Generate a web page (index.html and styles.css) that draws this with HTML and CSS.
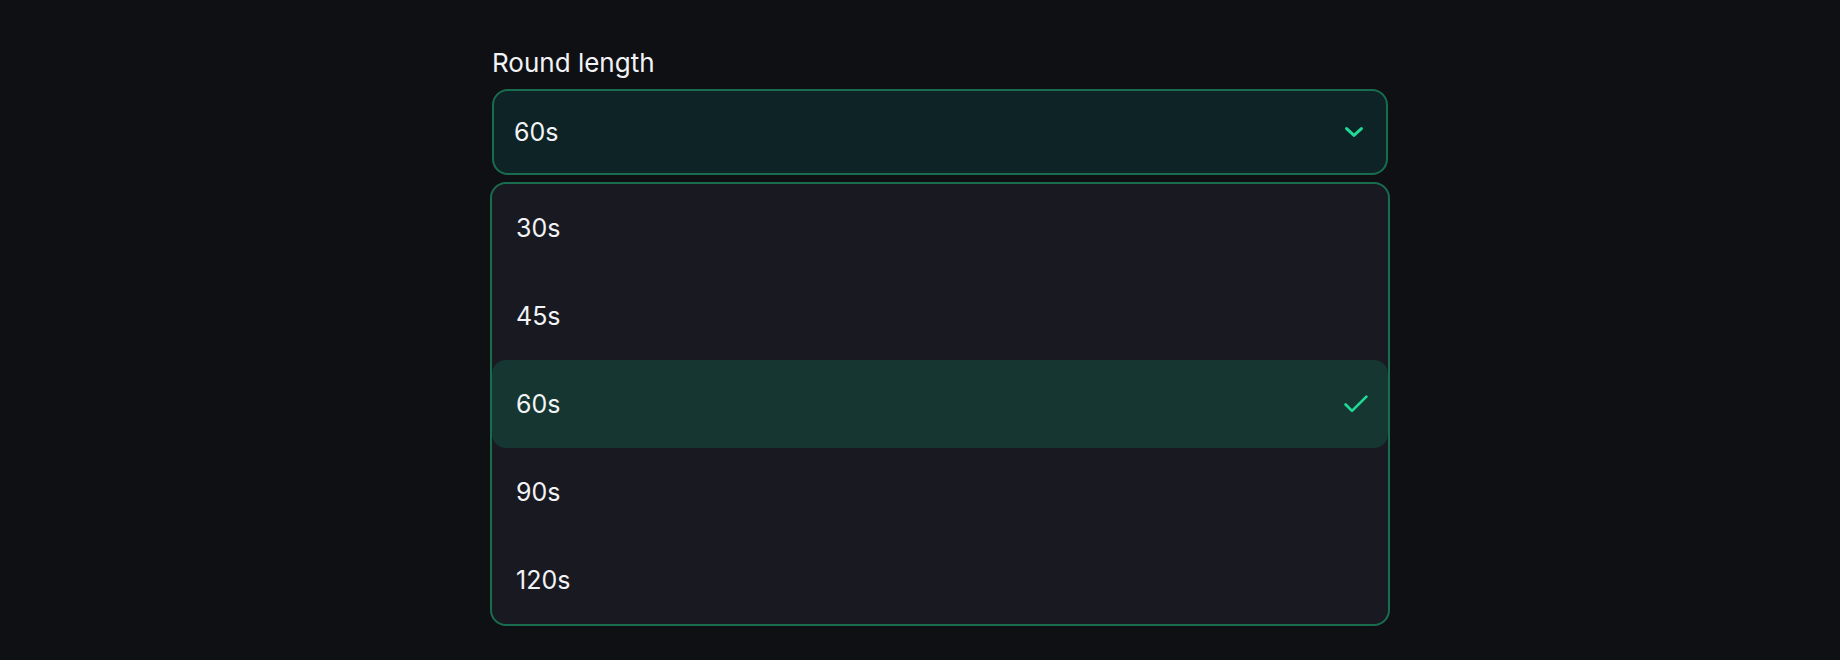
FILE: index.html
```html
<!DOCTYPE html>
<html lang="en">
<head>
<meta charset="utf-8">
<title>Round length</title>
<link rel="stylesheet" href="styles.css">
</head>
<body>
<main class="page">
  <div class="field">
    <label class="field-label">Round length</label>
    <div class="select-trigger">
      <span class="select-value">60s</span>
      <svg class="chevron" width="18" height="10" viewBox="0 0 18 10" aria-hidden="true">
        <path d="M1.6 1.6 L9 8.4 L16.4 1.6" fill="none" stroke="currentColor" stroke-width="3" stroke-linecap="round" stroke-linejoin="round"/>
      </svg>
    </div>
    <ul class="select-menu">
      <li class="option">30s</li>
      <li class="option">45s</li>
      <li class="option option-selected">
        <span>60s</span>
        <svg class="check" width="24" height="18" viewBox="0 0 24 18" aria-hidden="true">
          <path d="M1.6 9.5 L8 15.9 L22.4 1.6" fill="none" stroke="currentColor" stroke-width="2.7" stroke-linecap="round" stroke-linejoin="round"/>
        </svg>
      </li>
      <li class="option">90s</li>
      <li class="option">120s</li>
    </ul>
  </div>
</main>
</body>
</html>
```

FILE: styles.css
```css
html, body {
  margin: 0;
  padding: 0;
  background: #0f1014;
  height: 100%;
}

body {
  font-family: Inter, "Noto Sans", "Liberation Sans", sans-serif;
  color: #f2f3f5;
}

.page {
  padding: 47px 0 0 490px;
}

.field {
  width: 900px;
  display: flex;
  flex-direction: column;
}

.field-label {
  display: block;
  font-size: 26px;
  line-height: 32px;
  margin: 0 0 10px 2px;
  color: #f2f3f5;
}

.select-trigger {
  box-sizing: border-box;
  height: 86px;
  margin: 0 2px;
  border: 2px solid #186d4e;
  border-radius: 16px;
  background: #0e2325;
  display: flex;
  align-items: center;
  justify-content: space-between;
  padding: 0 23px 0 20px;
}

.select-value {
  font-size: 25px;
}

.chevron {
  color: #22d896;
  display: block;
}

.select-menu {
  list-style: none;
  margin: 7px 0 0 0;
  padding: 0;
  border: 2px solid #186d4e;
  border-radius: 16px;
  background: #191921;
  overflow: hidden;
}

.option {
  box-sizing: border-box;
  height: 88px;
  display: flex;
  align-items: center;
  justify-content: space-between;
  padding: 0 20px 0 24px;
  font-size: 25px;
}

.option-selected {
  background: #153631;
  border-radius: 14px;
}

.check {
  color: #22d896;
  display: block;
}
```
